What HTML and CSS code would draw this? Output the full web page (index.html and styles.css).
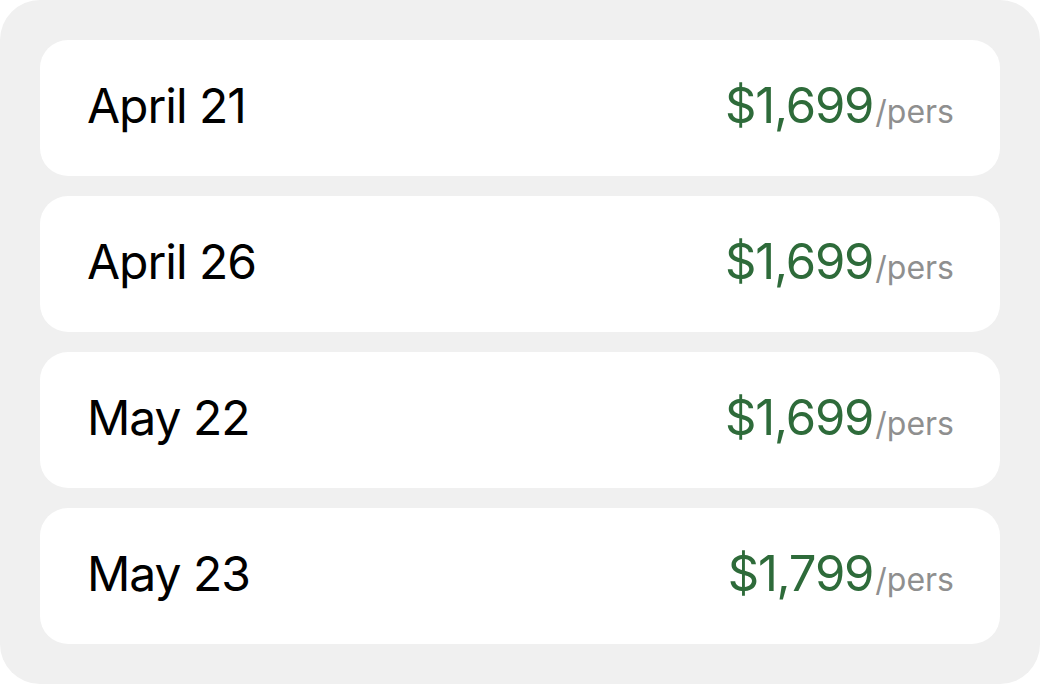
FILE: index.html
```html
<!DOCTYPE html>
<html>
<head>
<meta charset="utf-8">
<link rel="stylesheet" href="styles.css">
</head>
<body>
<div class="panel">
  <div class="row"><span class="date">April 21</span><span class="price"><span class="amount">$1,699</span><span class="unit">/pers</span></span></div>
  <div class="row"><span class="date">April 26</span><span class="price"><span class="amount">$1,699</span><span class="unit">/pers</span></span></div>
  <div class="row"><span class="date">May 22</span><span class="price"><span class="amount">$1,699</span><span class="unit">/pers</span></span></div>
  <div class="row"><span class="date">May 23</span><span class="price"><span class="amount">$1,799</span><span class="unit">/pers</span></span></div>
</div>
</body>
</html>
```

FILE: styles.css
```css
html, body {
  margin: 0;
  padding: 0;
  background: #ffffff;
}
body {
  font-family: "Inter", "Open Sans", sans-serif;
}
.panel {
  width: 1040px;
  height: 684px;
  box-sizing: border-box;
  background: #f0f0f0;
  border-radius: 40px;
  padding: 40px;
  display: flex;
  flex-direction: column;
  gap: 20px;
}
.row {
  height: 136px;
  box-sizing: border-box;
  background: #ffffff;
  border-radius: 28px;
  display: flex;
  align-items: center;
  justify-content: space-between;
  padding: 0 46px 6px 47px;
}
.date {
  font-size: 48px;
  color: #000;
  letter-spacing: -1px;
}
.price {
  display: flex;
  align-items: baseline;
}
.amount {
  font-size: 49px;
  color: #2e6b3a;
  letter-spacing: -1.2px;
}
.unit {
  font-size: 32px;
  color: #8f8f8f;
  margin-left: 2px;
  letter-spacing: 0;
}
```
